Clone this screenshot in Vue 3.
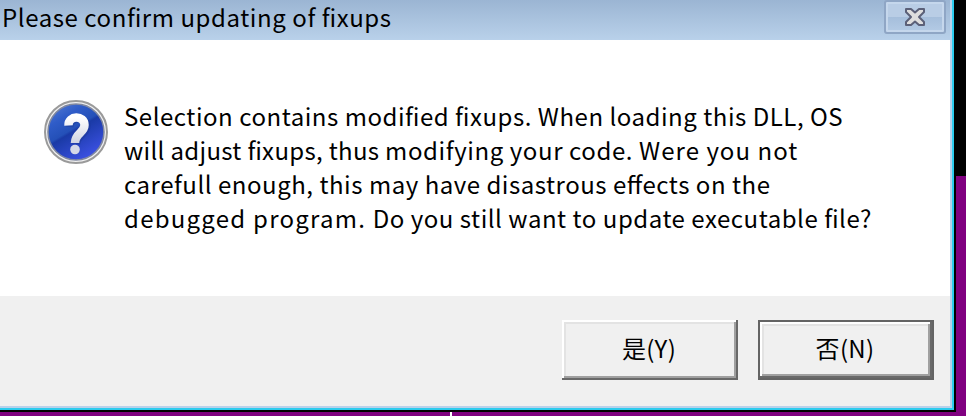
<script setup>
const lines = [
  [{ text: 'Selection contains modified fixups. When loading this DLL, OS', tone: 'regular' }],
  [
    { text: 'will adjust fixups, thus ', tone: 'tight' },
    { text: 'modifying your code. ', tone: 'medium' },
    { text: 'Were you not', tone: 'wide' },
  ],
  [{ text: 'carefull enough, this may have disastrous effects on the', tone: 'regular' }],
  [
    { text: 'debugged program. ', tone: 'widest' },
    { text: 'Do you still want to update executable file?', tone: 'regular' },
  ],
]
</script>

<template>
  <div class="desktop">
    <div class="dialog">
      <header class="titlebar">
        <h1 class="title">Please confirm updating of fixups</h1>
        <button class="close" aria-label="Close">
          <svg width="24" height="20" viewBox="0 0 24 20">
            <path d="M3 2H8L12 5.5L16 2H21V5L16 10L21 15V18H16L12 14.5L8 18H3V15L8 10L3 5Z" fill="#dedede" stroke="#5b6078" stroke-width="2" stroke-linejoin="round" />
          </svg>
        </button>
      </header>
      <main class="message">
        <svg class="icon" width="64" height="64" viewBox="0 0 64 64">
          <defs>
            <linearGradient id="blue" x1="0" y1="0" x2="0.6" y2="1">
              <stop offset="0" stop-color="#5a80d4" />
              <stop offset="0.3" stop-color="#2f5cc8" />
              <stop offset="0.52" stop-color="#2450b8" />
              <stop offset="0.56" stop-color="#1a3aa6" />
              <stop offset="1" stop-color="#3a50e0" />
            </linearGradient>
            <linearGradient id="mark" x1="0" y1="0" x2="0" y2="1">
              <stop offset="0" stop-color="#fff" />
              <stop offset="1" stop-color="#cfd3e2" />
            </linearGradient>
          </defs>
          <circle cx="32" cy="32" r="31" fill="#f0f0f0" stroke="#9a9a9a" stroke-width="2" />
          <circle cx="32" cy="32" r="28" fill="url(#blue)" stroke="#8088a0" stroke-width="1.6" />
          <path d="M24.5 26C25 15 41.5 15.5 41.5 25C41.5 34 32 33 31 43" transform="translate(1 1)" fill="none" stroke="#18348d" stroke-width="8" opacity="0.4" />
          <path d="M24.5 25.5C24 15 40.5 15 40.5 25C40.5 33 31 33 31 43" fill="none" stroke="url(#mark)" stroke-width="8.5" />
          <circle cx="31" cy="49.5" r="4.8" fill="#d4d8e7" />
        </svg>
        <p class="text">
          <span v-for="(line, i) in lines" :key="i" class="line"><span v-for="(run, j) in line" :key="j" :class="run.tone">{{ run.text }}</span></span>
        </p>
      </main>
      <footer class="actions">
        <button class="btn">是(Y)</button>
        <button class="btn default">否(N)</button>
      </footer>
    </div>
    <i class="tick"></i>
  </div>
</template>

<style>
body { margin: 0; overflow: hidden; }
</style>

<style scoped>
* { box-sizing: border-box; }
.desktop {
  position: relative;
  width: 966px;
  height: 416px;
  overflow: hidden;
  background: linear-gradient(#000 176px, #800080 176px);
  font-family: "Noto Sans CJK SC", "Noto Sans", sans-serif;
  font-feature-settings: "liga" 1;
  color: #000;
}
.dialog {
  width: 956px;
  height: 412px;
  display: flex;
  flex-direction: column;
  border: solid #000;
  border-width: 0 2px 2px 0;
  background: #b9d1ea;
  box-shadow: inset -2px -2px #2cccee;
  padding: 0 4px 4px 0;
}
.titlebar {
  height: 40px;
  flex: none;
  display: flex;
  align-items: flex-start;
  justify-content: space-between;
  padding: 0 4px 0 2px;
  background: linear-gradient(#9bb5d3, #b9d1ea);
}
.title {
  margin: 0;
  font-size: 24px;
  line-height: 34px;
  font-weight: 400;
  letter-spacing: 0.57px;
  white-space: nowrap;
}
.close {
  width: 62px;
  height: 34px;
  padding: 0;
  display: flex;
  align-items: center;
  justify-content: center;
  border: 2px solid #8fa6c5;
  border-radius: 3px;
  box-shadow: inset 0 0 0 2px #c5d7ec;
  background: linear-gradient(#b9cde5 50%, #a5bedb 50%, #b4cbe5);
}
.message {
  height: 256px;
  flex: none;
  display: flex;
  align-items: flex-start;
  gap: 16px;
  padding: 60px 0 0 44px;
  background: #fff;
}
.icon { flex: none; }
.text { margin: -1px 0 0; }
.line {
  display: block;
  width: max-content;
  font-size: 24px;
  line-height: 34px;
  white-space: pre;
}
.tight { letter-spacing: 0.32px; }
.regular { letter-spacing: 0.53px; }
.medium { letter-spacing: 0.6px; }
.wide { letter-spacing: 1.05px; }
.widest { letter-spacing: 1.25px; }
.actions {
  flex: 1;
  display: flex;
  justify-content: flex-end;
  align-items: flex-start;
  gap: 20px;
  padding: 24px 16px 0 0;
  background: #f0f0f0;
}
.btn {
  width: 176px;
  height: 60px;
  padding: 0 2px 4px 0;
  border: 0;
  background: #f0f0f0;
  color: #000;
  font: 24px/56px "Noto Sans CJK SC", sans-serif;
  letter-spacing: 0.3px;
  box-shadow: inset -2px -2px #696969, inset 2px 2px #fff, inset -4px -4px #a0a0a0, inset 4px 4px #e3e3e3;
}
.default {
  box-shadow: inset 0 0 0 2px #646464, inset -4px -4px #696969, inset 4px 4px #fff, inset -6px -6px #a0a0a0, inset 6px 6px #e3e3e3;
}
.tick {
  position: absolute;
  left: 450px;
  top: 412px;
  width: 2px;
  height: 4px;
  background: #fff;
}
</style>
